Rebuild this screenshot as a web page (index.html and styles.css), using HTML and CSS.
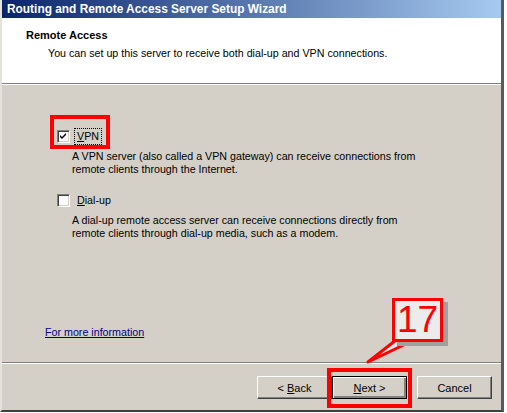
FILE: index.html
```html
<!DOCTYPE html>
<html lang="en">
<head>
    <meta charset="UTF-8">
    <title>Routing and Remote Access Server Setup Wizard</title>
    <link rel="stylesheet" href="styles.css">
</head>
<body>
    <div class="window">
        <div class="titlebar">Routing and Remote Access Server Setup Wizard</div>

        <div class="header">
            <div class="header-title">Remote Access</div>
            <div class="header-subtitle">You can set up this server to receive both dial-up and VPN connections.</div>
        </div>

        <div class="content">
            <label class="option">
                <span class="checkbox checked">
                    <svg width="7" height="7" viewBox="0 0 7 7"><path d="M0 2 L2 4 L6 0 L6 2 L2 6 L0 4 Z" fill="#000"/></svg>
                </span>
                <span class="option-label focused"><u>V</u>PN</span>
            </label>
            <div class="option-desc">
                A VPN server (also called a VPN gateway) can receive connections from<br>
                remote clients through the Internet.
            </div>

            <label class="option option-second">
                <span class="checkbox"></span>
                <span class="option-label"><u>D</u>ial-up</span>
            </label>
            <div class="option-desc">
                A dial-up remote access server can receive connections directly from<br>
                remote clients through dial-up media, such as a modem.
            </div>

            <a class="more-info" href="#">For more information</a>
        </div>

        <div class="buttons">
            <button class="btn">&lt; <u>B</u>ack</button>
            <button class="btn btn-default"><u>N</u>ext &gt;</button>
            <button class="btn btn-cancel">Cancel</button>
        </div>

        <!-- annotations -->
        <div class="mark mark-vpn"></div>
        <div class="mark mark-next"></div>
        <div class="callout">
            <svg class="callout-tail" width="60" height="26" viewBox="0 0 60 26">
                <path d="M30 1 L48 1 L2 23 Z" fill="#ececec" stroke="#ff0000" stroke-width="3" stroke-linejoin="round"/>
            </svg>
            <div class="callout-box">17</div>
        </div>
    </div>
</body>
</html>
```

FILE: styles.css
```css
body {
    margin: 0;
    background: #ffffff;
    font-family: 'Liberation Sans', Arial, sans-serif;
    font-size: 10.7px;
    color: #000000;
}

.window {
    position: relative;
    width: 499px;
    height: 410px;
    border-left: 2px solid #e4e2dc;
    border-right: 3px solid #5a5a5a;
    border-bottom: 2px solid #404040;
    background: #d4d0c8;
}

.titlebar {
    height: 18px;
    line-height: 18px;
    padding-left: 5px;
    font-weight: bold;
    font-size: 11.9px;
    color: #ffffff;
    background: linear-gradient(to right, #0a246a, #a6caf0);
}

.header {
    height: 66px;
    box-sizing: border-box;
    padding: 11px 0 0 24px;
    background: #ffffff;
    border-bottom: 1px solid #808080;
}

.header-title {
    font-weight: bold;
    font-size: 11px;
    line-height: 13px;
}

.header-subtitle {
    margin-top: 5px;
    padding-left: 22px;
    line-height: 13px;
}

.content {
    height: 279px;
    box-sizing: border-box;
    padding: 43px 0 0 55px;
    border-top: 1px solid #ffffff;
    border-bottom: 1px solid #808080;
}

.option {
    display: flex;
    align-items: center;
    height: 16px;
    gap: 4px;
}

.option-second {
    margin-top: 16px;
}

.checkbox {
    width: 9px;
    height: 9px;
    padding: 1px;
    display: flex;
    align-items: center;
    justify-content: center;
    background: #ffffff;
    border-top: 1px solid #808080;
    border-left: 1px solid #808080;
    border-right: 1px solid #ffffff;
    border-bottom: 1px solid #ffffff;
    box-shadow: inset 1px 1px 0 #404040, inset -1px -1px 0 #d4d0c8;
}

.option-label {
    padding: 1px 2px;
    line-height: 13px;
    border: 1px dotted transparent;
}

.option-label.focused {
    border-color: #000000;
}

.option-desc {
    margin-top: 6px;
    padding-left: 15px;
    line-height: 13px;
}

.more-info {
    display: inline-block;
    margin-top: 86px;
    margin-left: -12px;
    line-height: 13px;
    color: #000080;
}

.buttons {
    display: flex;
    justify-content: flex-end;
    padding: 12px 9px 0 0;
    border-top: 1px solid #ffffff;
}

.btn {
    width: 75px;
    height: 23px;
    padding: 0;
    font-family: inherit;
    font-size: 11px;
    color: #000000;
    background: #d4d0c8;
    border-top: 1px solid #ffffff;
    border-left: 1px solid #ffffff;
    border-right: 1px solid #404040;
    border-bottom: 1px solid #404040;
    box-shadow: inset -1px -1px 0 #808080;
}

.btn-default {
    border: 1px solid #000000;
    box-shadow: inset 1px 1px 0 #ffffff, inset -2px -2px 0 #808080;
}

.btn-cancel {
    margin-left: 10px;
}

.mark {
    position: absolute;
    border: 4px solid #ff0000;
}

.mark-vpn {
    left: 48px;
    top: 115px;
    width: 52px;
    height: 26px;
}

.mark-next {
    left: 325px;
    top: 368px;
    width: 77px;
    height: 32px;
}

.callout {
    position: absolute;
    left: 364px;
    top: 298px;
    width: 90px;
    height: 66px;
}

.callout-box {
    position: absolute;
    left: 26px;
    top: 0;
    width: 45px;
    height: 38px;
    border: 3px solid #ff0000;
    background: #ececec;
    box-shadow: 5px 4px 0 #a0a0a0;
    color: #ff0000;
    font-size: 37px;
    line-height: 38px;
    text-align: center;
}

.callout-tail {
    position: absolute;
    left: 0;
    top: 41px;
}
```
